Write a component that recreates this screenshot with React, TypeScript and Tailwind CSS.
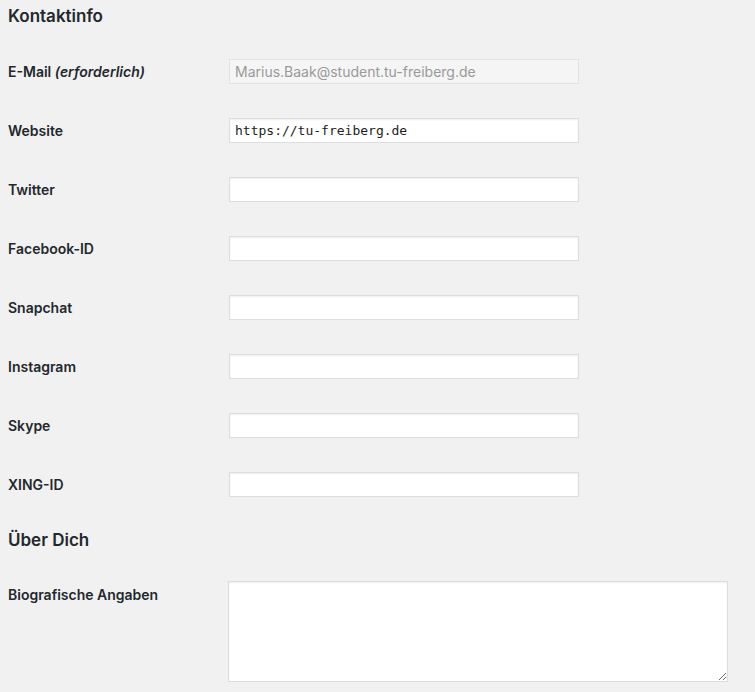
import React from "react";

const fields: { label: React.ReactNode; value?: string; disabled?: boolean; mono?: boolean }[] = [
  {
    label: (
      <>
        E-Mail <i className="font-semibold">(erforderlich)</i>
      </>
    ),
    value: "Marius.Baak@student.tu-freiberg.de",
    disabled: true,
  },
  { label: "Website", value: "https://tu-freiberg.de", mono: true },
  { label: "Twitter" },
  { label: "Facebook-ID" },
  { label: "Snapchat" },
  { label: "Instagram" },
  { label: "Skype" },
  { label: "XING-ID" },
];

export default function App() {
  return (
    <div
      className="min-h-[692px] w-[755px] bg-[#f1f1f1] pl-2 text-[#23282d]"
      style={{ fontFamily: "Inter, 'Noto Sans', sans-serif" }}
    >
      <h2 className="pt-[4px] text-[17px] font-semibold leading-[24px] h-[28px]">Kontaktinfo</h2>
      <div className="mt-[14px] flex flex-col">
        {fields.map((f, i) => (
          <div key={i} className="flex h-[59px] items-center">
            <div className="w-[220px] text-[14px] font-semibold leading-[20px]">{f.label}</div>
            <div
              className={
                "ml-px h-[25px] w-[350px] border px-[5px] text-[14px] leading-[23px] " +
                (f.disabled
                  ? "border-[#e2e2e2] bg-[#f5f5f5] text-[#9a9a9a]"
                  : "border-[#dddddd] bg-white text-[#222] shadow-[inset_0_1px_2px_rgba(0,0,0,0.07)]")
              }
              style={f.mono ? { fontFamily: "'DejaVu Sans Mono', monospace", fontSize: "13px" } : undefined}
            >
              {f.value}
            </div>
          </div>
        ))}
      </div>
      <h2 className="mt-[14px] text-[17px] font-semibold leading-[24px] h-[24px]">Über Dich</h2>
      <div className="flex items-start">
        <div className="mt-[33px] w-[220px] text-[14px] font-semibold leading-[20px]">Biografische Angaben</div>
        <textarea
          className="mt-[29px] h-[101px] w-[500px] resize border border-[#dddddd] bg-white shadow-[inset_0_1px_2px_rgba(0,0,0,0.07)] outline-none"
          defaultValue=""
        />
      </div>
    </div>
  );
}
